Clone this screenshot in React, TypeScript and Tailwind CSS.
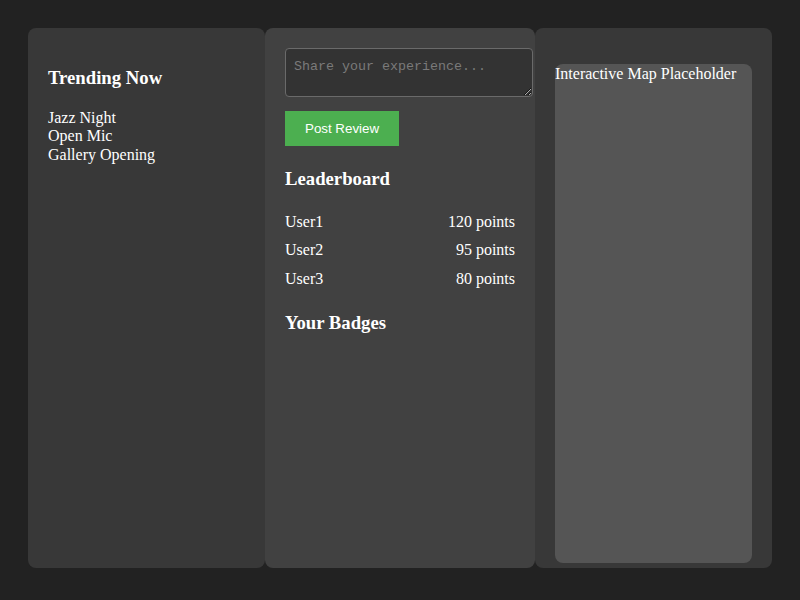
import React from "react";

export default function App() {
  const serif = { fontFamily: '"Liberation Serif", "Times New Roman", serif' };
  return (
    <div className="min-h-screen bg-[#222222] pt-[28px] px-[28px] text-white" style={serif}>
      <div className="flex h-[540px]">
        <div className="w-[237px] h-full rounded-lg bg-[#383838] p-5">
          <h3 className="font-bold text-[18.72px] leading-[21.5px] mt-[18.72px] mb-[20.5px]">Trending Now</h3>
          <ul className="text-base leading-[18.5px]">
            <li>Jazz Night</li>
            <li>Open Mic</li>
            <li>Gallery Opening</li>
          </ul>
        </div>
        <div className="w-[270px] h-full rounded-lg bg-[#414141] p-5">
          <textarea
            placeholder="Share your experience..."
            className="block box-border w-[248px] h-[49px] rounded bg-[#333333] border border-[#6a6a6a] px-2 pt-[10px] pb-2 text-[13.33px] leading-[15px] text-white placeholder-[#7a7a7a] resize-y"
            style={{ fontFamily: '"Liberation Mono", "Courier New", monospace' }}
          />
          <button
            className="block mt-[14px] h-[35px] px-5 bg-[#4caf50] text-white text-[13.33px] leading-[15px]"
            style={{ fontFamily: '"Liberation Sans", Arial, sans-serif' }}
          >
            Post Review
          </button>
          <h3 className="font-bold text-[18.72px] leading-[21.5px] mt-[21.5px] mb-[18.72px]">Leaderboard</h3>
          <div className="text-base leading-[18.4px]">
            <div className="flex justify-between py-[5px]"><span>User1</span><span>120 points</span></div>
            <div className="flex justify-between py-[5px]"><span>User2</span><span>95 points</span></div>
            <div className="flex justify-between py-[5px]"><span>User3</span><span>80 points</span></div>
          </div>
          <h3 className="font-bold text-[18.72px] leading-[21.5px] mt-[18.72px] mb-[18.72px]">Your Badges</h3>
        </div>
        <div className="w-[237px] h-full rounded-lg bg-[#383838] px-5 pt-9">
          <div className="h-[499px] rounded-lg bg-[#555555] text-base leading-[20px]">
            Interactive Map Placeholder
          </div>
        </div>
      </div>
    </div>
  );
}
